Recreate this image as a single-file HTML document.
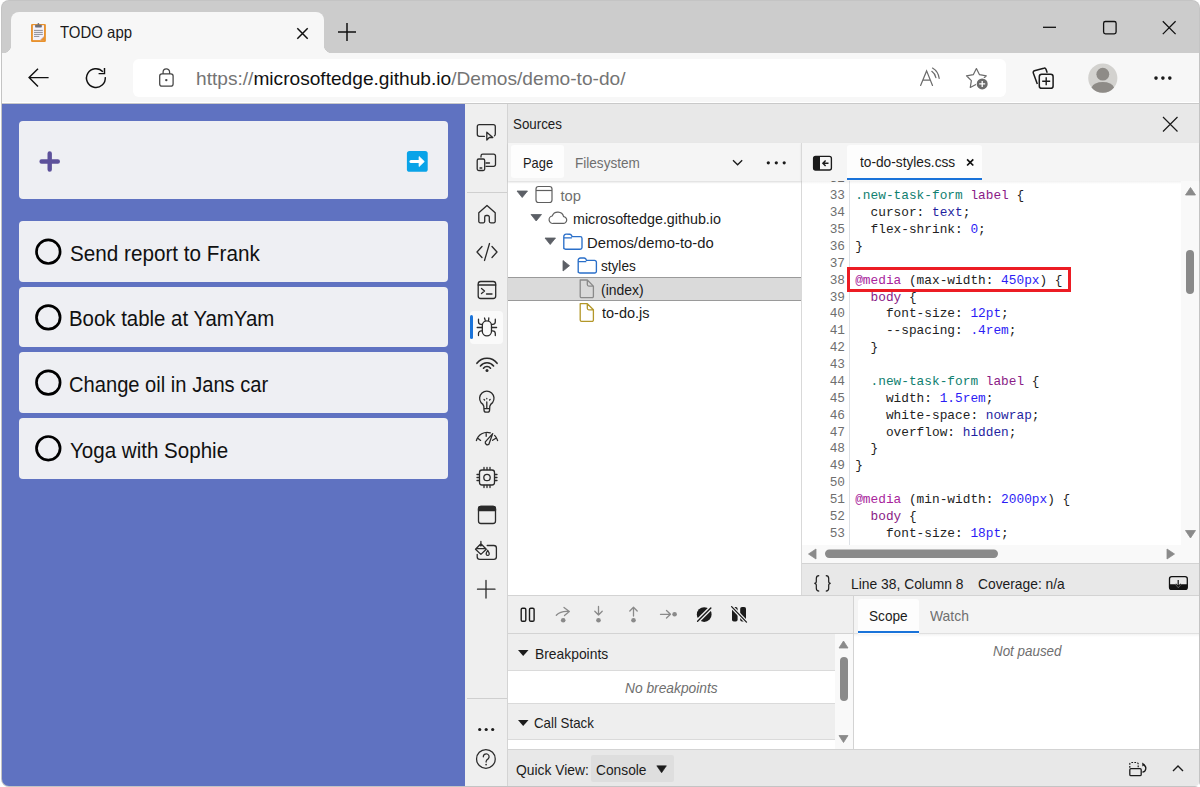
<!DOCTYPE html>
<html><head><meta charset="utf-8">
<style>
*{box-sizing:border-box;margin:0;padding:0}
html,body{width:1200px;height:787px;overflow:hidden;background:#fff}
body{position:relative;font-family:"Liberation Sans",sans-serif;color:#1b1b1b}
.a{position:absolute}
.t{position:absolute;white-space:pre;line-height:1}
svg{position:absolute;overflow:visible}
.cd div{height:16.88px}.cs{color:#0f8070}.ct{color:#8a1b86}.ck{color:#1f1fa0}.cn{color:#2b1cf5}.ca{color:#a8239b}
</style></head><body>
<!-- window frame -->
<div class="a" style="left:1px;top:0;width:1199px;height:787px;background:#c4c4c4;border-radius:8px 8px 5px 8px"></div>
<div class="a" style="left:2px;top:1px;width:1197px;height:785px;background:#cccccc;border-radius:7px 7px 4px 7px;overflow:hidden" id="win">
</div>
<!-- tab -->
<div class="a" style="left:11px;top:12px;width:313px;height:42px;background:#f7f7f7;border-radius:8px 8px 0 0"></div>
<div class="a" style="left:3px;top:45px;width:8px;height:8px;background:radial-gradient(circle at 0 0,#cccccc 8px,#f7f7f7 8.5px)"></div>
<div class="a" style="left:324px;top:45px;width:8px;height:8px;background:radial-gradient(circle at 100% 0,#cccccc 8px,#f7f7f7 8.5px)"></div>
<!-- toolbar -->
<div class="a" style="left:2px;top:53px;width:1197px;height:50px;background:#f7f7f7;border-bottom:1px solid #fff"></div>
<div class="a" style="left:2px;top:103px;width:1197px;height:1px;background:#c9c9c9"></div>
<!-- address bar -->
<div class="a" style="left:133px;top:59px;width:873px;height:38px;background:#fff;border-radius:6px"></div>


<!-- tab contents -->
<svg style="left:0;top:0" width="1200" height="110" viewBox="0 0 1200 110">
  <!-- clipboard icon -->
  <rect x="31" y="23.9" width="14.9" height="18" rx="1.2" fill="#e8922f"/>
  <rect x="32.9" y="25.2" width="11.1" height="14.9" fill="#f3f1fa"/>
  <path d="M40.2 40.1 L44 36.3 V40.1 Z" fill="#e8922f"/>
  <path d="M40.2 40.1 L44 36.3" stroke="#cfc8ea" stroke-width="0.9"/>
  <rect x="35.1" y="24.8" width="6.7" height="2.6" rx="0.6" fill="#6e6f78"/>
  <circle cx="38.4" cy="24" r="0.9" fill="#6e6f78"/>
  <path d="M34 30.4h8.8M34 32.4h8.8M34 34.4h8.8M34 36.4h5.3" stroke="#7b7b84" stroke-width="0.85"/>
  <!-- tab close -->
  <path d="M297.3 28.3 L307.7 38.7 M307.7 28.3 L297.3 38.7" stroke="#111" stroke-width="1.5"/>
  <!-- new tab -->
  <path d="M347 23 V41 M338 32 H356" stroke="#111" stroke-width="1.5"/>
  <!-- minimize -->
  <path d="M1043 27.3 H1056" stroke="#111" stroke-width="1.3"/>
  <!-- maximize -->
  <rect x="1103.6" y="21.5" width="12.5" height="12.3" rx="1.8" fill="none" stroke="#111" stroke-width="1.3"/>
  <!-- close -->
  <path d="M1162.8 21.3 L1175.6 34.1 M1175.6 21.3 L1162.8 34.1" stroke="#111" stroke-width="1.3"/>
  <!-- back -->
  <path d="M29 77.6 H48.6 M38 68.8 L29.1 77.6 L38 86.4" fill="none" stroke="#111" stroke-width="1.45" stroke-linejoin="miter"/>
  <!-- refresh -->
  <path d="M102.89 71.81 A9.4 9.4 0 1 0 105.25 77.12" fill="none" stroke="#111" stroke-width="1.45"/>
  <path d="M104.5 68 V73.6 H98.6" fill="none" stroke="#111" stroke-width="1.45"/>
  <!-- lock -->
  <rect x="159.7" y="73.9" width="13.4" height="12.2" rx="2.2" fill="none" stroke="#444" stroke-width="1.25"/>
  <path d="M163.1 73.9 V72 A3.25 3.25 0 0 1 169.6 72 V73.9" fill="none" stroke="#444" stroke-width="1.25"/>
  <circle cx="166.3" cy="80.1" r="1.2" fill="#444"/>
  <!-- read aloud -->
  <path d="M920.6 85.5 L926.6 70.9 L932.5 85.5 M923.2 80.1 H930" fill="none" stroke="#6b6b6b" stroke-width="1.2" stroke-linecap="round"/>
  <path d="M931.8 71.3 Q935 73.6 935.9 77.6 M932.5 68.1 Q938.2 71.5 939.2 78.4" fill="none" stroke="#6b6b6b" stroke-width="1.2" stroke-linecap="round"/>
  <!-- favorites star -->
  <path d="M976.40 68.60 L979.52 74.71 L986.29 75.79 L981.44 80.64 L982.51 87.41 L976.40 84.30 L970.29 87.41 L971.36 80.64 L966.51 75.79 L973.28 74.71 Z" fill="none" stroke="#6b6b6b" stroke-width="1.2" stroke-linejoin="round"/>
  <circle cx="982.2" cy="83.9" r="6.3" fill="#fff"/>
  <circle cx="982.2" cy="83.9" r="5.5" fill="#6b6b6b"/>
  <path d="M982.2 80.9 V86.9 M979.2 83.9 H985.2" stroke="#fff" stroke-width="1.3"/>
  <!-- collections -->
  <path d="M1037.3 84 L1033.3 73 A1.8 1.8 0 0 1 1034.4 70.7 L1043.8 68.2 A1.8 1.8 0 0 1 1046 69.3 L1047.2 72.8" fill="none" stroke="#1a1a1a" stroke-width="1.5" stroke-linejoin="round"/>
  <rect x="1039.3" y="74.3" width="13.8" height="14" rx="2.4" fill="#f7f7f7" stroke="#1a1a1a" stroke-width="1.5"/>
  <path d="M1046.2 77.3 V85.3 M1042.2 81.3 H1050.2" stroke="#1a1a1a" stroke-width="1.4"/>
  <!-- avatar -->
  <circle cx="1102.8" cy="78.1" r="14.6" fill="#d3d2cf"/>
  <circle cx="1102.8" cy="74.2" r="6.4" fill="#8e8b87"/>
  <path d="M1091.5 87.5 Q1094 82 1102.8 82 Q1111.6 82 1114.1 87.5 A14.6 14.6 0 0 1 1091.5 87.5 Z" fill="#8e8b87"/>
  <!-- more -->
  <circle cx="1156" cy="78.1" r="1.8" fill="#1a1a1a"/><circle cx="1162.9" cy="78.1" r="1.8" fill="#1a1a1a"/><circle cx="1169.8" cy="78.1" r="1.8" fill="#1a1a1a"/>
</svg>
<div class="t" style="left:59.6px;top:23.7px;font-size:16.5px;color:#1a1a1a;transform:scaleX(0.9063);transform-origin:0 0">TODO app</div>
<div class="t" style="left:196.31px;top:68.7px;font-size:19.25px;color:#747474;transform:scaleX(0.9935);transform-origin:0 0">https://<span style="color:#111">microsoftedge.github.io</span>/Demos/demo-to-do/</div>

<!-- page -->
<div class="a" style="left:2px;top:104px;width:463px;height:682px;background:#5f72c1;border-bottom-left-radius:7px"></div>


<div class="a" style="left:19px;top:121px;width:429px;height:78px;background:#eeeff3;border-radius:4px"></div>

<div class="a" style="left:19px;top:221px;width:429px;height:61px;background:#eeeff3;border-radius:4px"></div>
<div class="a" style="left:19px;top:287px;width:429px;height:60px;background:#eeeff3;border-radius:4px"></div>
<div class="a" style="left:19px;top:352px;width:429px;height:61px;background:#eeeff3;border-radius:4px"></div>
<div class="a" style="left:19px;top:418px;width:429px;height:61px;background:#eeeff3;border-radius:4px"></div>
<div class="t" style="left:69.64px;top:243.8px;font-size:21.5px;color:#111;transform:scaleX(0.9622);transform-origin:0 0">Send report to Frank</div>
<div class="t" style="left:68.9px;top:309.2px;font-size:21.5px;color:#111;transform:scaleX(0.9488);transform-origin:0 0">Book table at YamYam</div>
<div class="t" style="left:69.26px;top:375.2px;font-size:21.5px;color:#111;transform:scaleX(0.9365);transform-origin:0 0">Change oil in Jans car</div>
<div class="t" style="left:69.94px;top:440.7px;font-size:21.5px;color:#111;transform:scaleX(0.9561);transform-origin:0 0">Yoga with Sophie</div>

<svg style="left:0;top:0" width="470" height="500">
  <path d="M49.7 153.4 V169.6 M41.6 161.45 H57.8" stroke="#5d519b" stroke-width="4.4" stroke-linecap="round"/>
  <rect x="406.9" y="150.9" width="20.8" height="20.9" rx="2.6" fill="#09a3e8"/>
  <path d="M411 161.55 H420" stroke="#fff" stroke-width="3.1" stroke-linecap="round"/>
  <path d="M419.1 156.6 L424.3 161.55 L419.1 166.5 Z" fill="#fff" stroke="#fff" stroke-width="0.8" stroke-linejoin="round"/>
  <circle cx="48.3" cy="251.7" r="11.8" fill="none" stroke="#000" stroke-width="2.7"/>
  <circle cx="48.3" cy="317.4" r="11.8" fill="none" stroke="#000" stroke-width="2.7"/>
  <circle cx="48.3" cy="382.6" r="11.8" fill="none" stroke="#000" stroke-width="2.7"/>
  <circle cx="48.3" cy="448.3" r="11.8" fill="none" stroke="#000" stroke-width="2.7"/>
</svg>
<!-- devtools -->
<div class="a" style="left:465px;top:104px;width:734px;height:682px;background:#fff"></div>

<!-- activity bar -->
<div class="a" style="left:465px;top:104px;width:43px;height:682px;background:#efefef;border-right:1px solid #d4d4d4"></div>
<div class="a" style="left:467px;top:192px;width:40px;height:1px;background:#cfcfcf"></div>
<div class="a" style="left:467px;top:698px;width:40px;height:1px;background:#cfcfcf"></div>
<div class="a" style="left:470px;top:311px;width:33px;height:33px;background:#fafafa;border-radius:4px"></div>
<div class="a" style="left:470px;top:315px;width:3px;height:24px;background:#1a73d9;border-radius:1.5px"></div>
<!-- header -->
<div class="a" style="left:508px;top:104px;width:691px;height:39px;background:#e8e8e8"></div>
<div class="t" style="left:513.35px;top:116.75px;font-size:14.8px;color:#1b1b1b;transform:scaleX(0.9009);transform-origin:0 0">Sources</div>
<!-- navigator tabs -->
<div class="a" style="left:508px;top:143px;width:293px;height:38px;background:#f5f5f5;box-shadow:0 1px 2px rgba(0,0,0,0.09)"></div>
<div class="a" style="left:511px;top:145px;width:53px;height:33px;background:#fdfdfd;border-radius:3px"></div>
<div class="t" style="left:522.83px;top:155.8px;font-size:14.8px;color:#1b1b1b;transform:scaleX(0.8697);transform-origin:0 0">Page</div>
<div class="t" style="left:575.08px;top:155.7px;font-size:14.8px;color:#6f6f6f;transform:scaleX(0.9174);transform-origin:0 0">Filesystem</div>
<!-- editor tabs -->
<div class="a" style="left:801px;top:143px;width:398px;height:38px;background:#f5f5f5;box-shadow:0 1px 2px rgba(0,0,0,0.09);border-left:1px solid #dcdcdc"></div>
<div class="a" style="left:847px;top:145px;width:135px;height:35px;background:#fdfdfd;border-radius:3px 3px 0 0"></div>
<div class="a" style="left:847px;top:178px;width:135px;height:2px;background:#1a73d9"></div>
<div class="t" style="left:859.5px;top:155.3px;font-size:14.8px;color:#1b1b1b;transform:scaleX(0.9262);transform-origin:0 0">to-do-styles.css</div>

<!-- editor -->
<div class="a" style="left:801px;top:181px;width:380px;height:364px;background:#fff;overflow:hidden">
  <div class="a cd" style="left:0;top:-9.6px;width:44px;text-align:right;font-family:'Liberation Mono',monospace;font-size:12.8px;line-height:16.88px;color:#6e6e6e"><div>32</div><div>33</div><div>34</div><div>35</div><div>36</div><div>37</div><div>38</div><div>39</div><div>40</div><div>41</div><div>42</div><div>43</div><div>44</div><div>45</div><div>46</div><div>47</div><div>48</div><div>49</div><div>50</div><div>51</div><div>52</div><div>53</div><div>54</div></div>
  <div class="a" style="left:48px;top:0;width:1px;height:364px;background:#dde1e6"></div>
  <div class="a cd" style="left:54.2px;top:-9.6px;white-space:pre;font-family:'Liberation Mono',monospace;font-size:12.8px;line-height:16.88px;color:#222"><div><span class="cp">  </span></div><div><span class="cs">.new-task-form</span> <span class="ct">label</span> {</div><div>  cursor: <span class="ck">text</span>;</div><div>  flex-shrink: <span class="cn">0</span>;</div><div>}</div><div></div><div><span class="ca">@media</span> (max-width: <span class="cn">450px</span>) {</div><div>  <span class="ct">body</span> {</div><div>    font-size: <span class="cn">12pt</span>;</div><div>    --spacing: <span class="cn">.4rem</span>;</div><div>  }</div><div></div><div>  <span class="cs">.new-task-form</span> <span class="ct">label</span> {</div><div>    width: <span class="cn">1.5rem</span>;</div><div>    white-space: <span class="ck">nowrap</span>;</div><div>    overflow: <span class="ck">hidden</span>;</div><div>  }</div><div>}</div><div></div><div><span class="ca">@media</span> (min-width: <span class="cn">2000px</span>) {</div><div>  <span class="ct">body</span> {</div><div>    font-size: <span class="cn">18pt</span>;</div><div>    --spacing: <span class="cn">1rem</span>;</div></div>
</div>
<div class="a" style="left:847px;top:267px;width:224px;height:25px;border:3px solid #ec1c24"></div>


<!-- navigator / editor split -->
<div class="a" style="left:801px;top:143px;width:1px;height:452px;background:#d9d9d9"></div>
<!-- vertical scrollbar -->
<div class="a" style="left:1181px;top:181px;width:18px;height:364px;background:#f9f9f9"></div>

<div class="a" style="left:802px;top:545px;width:397px;height:18px;background:#f9f9f9"></div>
<!-- status bar -->
<div class="a" style="left:802px;top:563px;width:397px;height:33px;background:#e8e8e8;border-top:1px solid #d3d3d3;border-bottom:1px solid #d3d3d3"></div>
<div class="t" style="left:851.36px;top:577.2px;font-size:14.8px;color:#1b1b1b;transform:scaleX(0.9364);transform-origin:0 0">Line 38, Column 8</div>
<div class="t" style="left:977.57px;top:577.2px;font-size:14.8px;color:#1b1b1b;transform:scaleX(0.9337);transform-origin:0 0">Coverage: n/a</div>
<!-- bottom pane -->
<div class="a" style="left:508px;top:595px;width:345px;height:39px;background:#efefef;border-top:1px solid #d3d3d3;border-bottom:1px solid #d3d3d3"></div>
<div class="a" style="left:508px;top:634px;width:327px;height:37px;background:#eeeeee;border-bottom:1px solid #dadada"></div>
<div class="a" style="left:508px;top:671px;width:327px;height:32px;background:#fff"></div>
<div class="a" style="left:508px;top:703px;width:327px;height:37px;background:#eeeeee;border-top:1px solid #dadada;border-bottom:1px solid #dadada"></div>
<div class="a" style="left:508px;top:740px;width:327px;height:9px;background:#fff"></div>
<div class="a" style="left:835px;top:634px;width:18px;height:115px;background:#f9f9f9"></div>
<div class="t" style="left:534.96px;top:646.75px;font-size:14.8px;color:#1b1b1b;transform:scaleX(0.9364);transform-origin:0 0">Breakpoints</div>
<div class="t" style="left:625.3px;top:680.8px;font-size:14.8px;font-style:italic;color:#6f6f6f;transform:scaleX(0.9313);transform-origin:0 0">No breakpoints</div>
<div class="t" style="left:534.4px;top:715.8px;font-size:14.8px;color:#1b1b1b;transform:scaleX(0.8985);transform-origin:0 0">Call Stack</div>
<!-- sidebar -->
<div class="a" style="left:853px;top:596px;width:1px;height:153px;background:#d3d3d3"></div>
<div class="a" style="left:854px;top:596px;width:345px;height:38px;background:#f4f4f4;border-bottom:1px solid #e0e0e0"></div>
<div class="a" style="left:858px;top:599px;width:61px;height:35px;background:#fdfdfd;border-radius:3px 3px 0 0"></div>
<div class="a" style="left:858px;top:631px;width:61px;height:2px;background:#1a73d9"></div>
<div class="t" style="left:868.68px;top:608.7px;font-size:14.8px;color:#1b1b1b;transform:scaleX(0.92);transform-origin:0 0">Scope</div>
<div class="t" style="left:930.4px;top:608.7px;font-size:14.8px;color:#6f6f6f;transform:scaleX(0.939);transform-origin:0 0">Watch</div>
<div class="a" style="left:854px;top:634px;width:345px;height:115px;background:#fff"></div>
<div class="t" style="left:992.6px;top:643.7px;font-size:14.8px;font-style:italic;color:#6f6f6f;transform:scaleX(0.9053);transform-origin:0 0">Not paused</div>
<!-- quick view -->
<div class="a" style="left:508px;top:749px;width:691px;height:37px;background:#e8e8e8;border-top:1px solid #d3d3d3;border-bottom-right-radius:4px"></div>
<div class="a" style="left:591px;top:755px;width:83px;height:27px;background:#dedede;border-radius:2px"></div>
<div class="t" style="left:515.86px;top:762.7px;font-size:14.8px;color:#1b1b1b;transform:scaleX(0.9355);transform-origin:0 0">Quick View:</div>
<div class="t" style="left:595.77px;top:762.7px;font-size:14.8px;color:#1b1b1b;transform:scaleX(0.9302);transform-origin:0 0">Console</div>

<!-- tree -->
<div class="a" style="left:508px;top:277px;width:293px;height:24px;background:#dadada;border-top:1px solid #9a9a9a;border-bottom:1px solid #9a9a9a"></div>
<div class="t" style="left:560.4px;top:189.25px;font-size:14.8px;color:#6f6f6f;transform:scaleX(1.0);transform-origin:0 0">top</div>
<div class="t" style="left:573.03px;top:212.1px;font-size:14.8px;color:#1b1b1b;transform:scaleX(0.9671);transform-origin:0 0">microsoftedge.github.io</div>
<div class="t" style="left:587.0px;top:235.5px;font-size:14.8px;color:#1b1b1b;transform:scaleX(1.0);transform-origin:0 0">Demos/demo-to-do</div>
<div class="t" style="left:601.08px;top:259.2px;font-size:14.8px;color:#1b1b1b;transform:scaleX(0.9189);transform-origin:0 0">styles</div>
<div class="t" style="left:601.26px;top:283.2px;font-size:14.8px;color:#1b1b1b;transform:scaleX(0.9419);transform-origin:0 0">(index)</div>
<div class="t" style="left:602.2px;top:306px;font-size:14.8px;color:#1b1b1b;transform:scaleX(0.9792);transform-origin:0 0">to-do.js</div>

<svg style="left:0;top:0" width="1200" height="787">
  <path d="M1185.5 195 L1190.5 187.5 L1195.5 195 Z" fill="#8a8a8a" stroke="#8a8a8a" stroke-width="0.8" stroke-linejoin="round"/>
  <rect x="1186" y="250" width="8" height="44" rx="4" fill="#8a8a8a"/>
  <path d="M1185.5 530.5 L1190.5 538 L1195.5 530.5 Z" fill="#8a8a8a" stroke="#8a8a8a" stroke-width="0.8" stroke-linejoin="round"/>
  <!-- h scrollbar -->
  <path d="M816 549 L808.5 554 L816 559 Z" fill="#8a8a8a" stroke="#8a8a8a" stroke-width="0.8" stroke-linejoin="round"/>
  <rect x="825" y="549.5" width="173" height="8.5" rx="4.2" fill="#8a8a8a"/>
  <path d="M1167 549 L1174.5 554 L1167 559 Z" fill="#8a8a8a" stroke="#8a8a8a" stroke-width="0.8" stroke-linejoin="round"/>

  <!-- header close -->
  <path d="M1163 117 L1177.5 131.5 M1177.5 117 L1163 131.5" stroke="#1b1b1b" stroke-width="1.2"/>
  <!-- nav dropdown chevron + more -->
  <path d="M733 160.2 L737.6 164.8 L742.2 160.2" fill="none" stroke="#1b1b1b" stroke-width="1.3"/>
  <circle cx="768.3" cy="162.8" r="1.6" fill="#1b1b1b"/><circle cx="776.3" cy="162.8" r="1.6" fill="#1b1b1b"/><circle cx="784.2" cy="162.8" r="1.6" fill="#1b1b1b"/>
  <!-- toggle navigator icon -->
  <rect x="813.6" y="156.4" width="17.8" height="13.6" rx="2" fill="none" stroke="#1b1b1b" stroke-width="1.35"/>
  <path d="M814 157 H820 V170 H814 Z" fill="#1b1b1b"/>
  <path d="M828.5 163.2 H823 M825.6 160.5 L822.9 163.2 L825.6 165.9" fill="none" stroke="#1b1b1b" stroke-width="1.45"/>
  <!-- editor tab close -->
  <path d="M967.1 159.3 L973.3 165.5 M973.3 159.3 L967.1 165.5" stroke="#111" stroke-width="1.7"/>
  <!-- status bar icon -->
  <rect x="1169.5" y="576.6" width="17.8" height="12.8" rx="2.2" fill="none" stroke="#111" stroke-width="1.3"/>
  <path d="M1169.5 584.3 H1175 L1178.2 587.8 L1181.4 584.3 H1187.3 V587.2 A2.2 2.2 0 0 1 1185.1 589.4 H1171.7 A2.2 2.2 0 0 1 1169.5 587.2 Z" fill="#111"/>
  <path d="M1178.2 580 V586.6 M1175.6 583.9 L1178.2 586.6 L1180.8 583.9" fill="none" stroke="#111" stroke-width="1.2"/>
  <!-- braces -->
  <path d="M819.2 575.6 Q816.3 575.6 816.3 578.4 V581.4 Q816.3 583.3 814.3 583.3 Q816.3 583.3 816.3 585.2 V588.3 Q816.3 591.1 819.2 591.1 M825.8 575.6 Q828.7 575.6 828.7 578.4 V581.4 Q828.7 583.3 830.7 583.3 Q828.7 583.3 828.7 585.2 V588.3 Q828.7 591.1 825.8 591.1" fill="none" stroke="#1b1b1b" stroke-width="1.2"/>
</svg>

<svg style="left:0;top:0" width="1200" height="787">
 <g fill="none" stroke="#2b2b2b" stroke-width="1.3" stroke-linecap="round" stroke-linejoin="round">
  <!-- inspect -->
  <path d="M484.5 136.3 H479.3 A2 2 0 0 1 477.3 134.3 V126.6 A2 2 0 0 1 479.3 124.6 H493.3 A2 2 0 0 1 495.3 126.6 V134 A2 2 0 0 1 494.5 135.8"/>
  <path d="M486.8 132.2 V140 L489.3 137.5 H492.8 Z"/>
  <!-- device -->
  <path d="M481 157 V156 A1.8 1.8 0 0 1 482.8 154.2 H493.7 A1.8 1.8 0 0 1 495.5 156 V164.5 A1.8 1.8 0 0 1 493.7 166.3 H486"/>
  <path d="M486 163 H489.5"/>
  <rect x="477.2" y="159" width="7.5" height="11.5" rx="1.5"/>
  <path d="M480 168 H481.8"/>
  <!-- home -->
  <path d="M478.8 221.6 V212.8 L487 205.5 L495.2 212.8 V221.6 A1.5 1.5 0 0 1 493.7 222.8 H490.8 A1.5 1.5 0 0 1 489.3 221.3 V217 A1.5 1.5 0 0 0 487.8 215.5 H486.2 A1.5 1.5 0 0 0 484.7 217 V221.3 A1.5 1.5 0 0 1 483.2 222.8 H480.3 A1.5 1.5 0 0 1 478.8 221.6 Z"/>
  <!-- code -->
  <path d="M482 246.5 L477 252 L482 257.5 M492 246.5 L497 252 L492 257.5 M489.5 243.5 L484.5 260.5"/>
  <!-- console -->
  <rect x="478.2" y="281.5" width="17.5" height="17" rx="2.5"/>
  <path d="M478.2 285 H495.7"/>
  <path d="M481.5 288.5 L484.5 291 L481.5 293.5 M486.5 294 H492"/>
  <!-- network -->
  <path d="M476.9 363.3 A12.6 12.6 0 0 1 497.1 363.3 M480.45 366 A8.2 8.2 0 0 1 493.55 366 M483.5 368.25 A4.4 4.4 0 0 1 490.5 368.25" stroke-width="1.6"/>
  <circle cx="487" cy="370.4" r="1.5" fill="#2b2b2b" stroke="none"/>
  <!-- bulb -->
  <path d="M483.8 406.2 Q483.2 404.2 481 402.6 A7.2 7.2 0 1 1 492.6 402.6 Q490.4 404.2 489.8 406.2 L489.6 410 A2.2 2.2 0 0 1 487.4 412.2 H486.2 A2.2 2.2 0 0 1 484 410 Z M484 408.6 H489.6 M486.8 402 V408.6"/>
  <path d="M484 399.4 L484.6 400 M489.6 400 L490.2 399.4 M486.8 398.5 V398.8"/>
  <!-- gauge -->
  <path d="M476.4 440.5 A11.1 11.1 0 0 1 490.3 432.8 M494.6 435.4 A11.1 11.1 0 0 1 497.6 440.5 M486.2 432.6 V436.3 M477.8 438.2 L480.6 440.4 M495.9 438.2 L492.6 440.3"/>
  <path d="M492.7 433.6 L485.3 441.9 A2.3 2.3 0 0 0 488.9 444.3 Z"/>
  <!-- chip -->
  <rect x="479.5" y="470" width="15" height="15" rx="2.5"/>
  <circle cx="487" cy="477.5" r="3.2"/>
  <path d="M484 467.5 V469.5 M487 467.5 V469.5 M490 467.5 V469.5 M484 485.5 V487.5 M487 485.5 V487.5 M490 485.5 V487.5 M477 474.5 H479 M477 477.5 H479 M477 480.5 H479 M495 474.5 H497 M495 477.5 H497 M495 480.5 H497"/>
  <!-- app -->
  <rect x="478.5" y="506.5" width="17" height="17" rx="2.5"/>
  <path d="M478.5 509 A2.5 2.5 0 0 1 481 506.5 H493 A2.5 2.5 0 0 1 495.5 509 V510.5 H478.5 Z" fill="#2b2b2b"/>
  <!-- css overview -->
  <path d="M487.2 545.5 H493.8 A2.6 2.6 0 0 1 496.4 548.1 V556.7 A2.6 2.6 0 0 1 493.8 559.3 H479.8 A2.6 2.6 0 0 1 477.2 556.7 V554.3"/>
  <path d="M475.5 549.2 L480.9 543.8 L486.3 549.2 L480.9 554.4 Z M477 548.6 H485 M480.9 541.5 V546"/>
  <path d="M487.7 550.3 Q485.8 553 486.3 554.5 A1.5 1.5 0 0 0 489.1 554.5 Q489.6 553 487.7 550.3 Z"/>
  <!-- plus -->
  <path d="M486 580.5 V598 M477.5 589.2 H495"/>
  <!-- help -->
  <circle cx="485.9" cy="758.9" r="9.35" stroke-width="1.25"/>
 </g>
 <path d="M483.3 756.8 A2.9 2.9 0 1 1 488.4 758.6 Q486.1 759.9 486.1 761.6 V762" fill="none" stroke="#2b2b2b" stroke-width="1.25" stroke-linecap="round"/><circle cx="486.1" cy="764.6" r="0.85" fill="#2b2b2b"/>
 <circle cx="479.7" cy="729.5" r="1.6" fill="#1b1b1b"/><circle cx="486.2" cy="729.5" r="1.6" fill="#1b1b1b"/><circle cx="492.7" cy="729.5" r="1.6" fill="#1b1b1b"/>
 <!-- bug -->
 <g fill="none" stroke="#2b2b2b" stroke-width="1.3" stroke-linecap="round" stroke-linejoin="round">
  <rect x="482.3" y="320.8" width="9.2" height="15" rx="4.6"/>
  <path d="M485.3 320.5 L484.5 318 M488.6 320.5 L488.8 318"/>
  <path d="M482.3 324.3 H481 A2.5 2.5 0 0 1 478.5 321.8 V319.2 M491.5 324.3 H492.8 A2.5 2.5 0 0 0 495.3 321.8 V319.2"/>
  <path d="M477.2 327.5 H482.3 M491.5 327.5 H496.6"/>
  <path d="M482.3 330.8 H481.3 A2.8 2.8 0 0 0 478.5 333.6 V335.6 M491.5 330.8 H492.5 A2.8 2.8 0 0 1 495.3 333.6 V335.6"/>
 </g>
 <!-- tree icons -->
 <path d="M517 191 H527.5 L522.2 197.5 Z" fill="#5c5f66" stroke="#5c5f66" stroke-width="0.8" stroke-linejoin="round"/>
 <path d="M531 214.5 H541.5 L536.2 221 Z" fill="#5c5f66" stroke="#5c5f66" stroke-width="0.8" stroke-linejoin="round"/>
 <path d="M545 238 H555.5 L550.2 244.5 Z" fill="#5c5f66" stroke="#5c5f66" stroke-width="0.8" stroke-linejoin="round"/>
 <path d="M563 260.5 V271 L569.5 265.7 Z" fill="#5c5f66" stroke="#5c5f66" stroke-width="0.8" stroke-linejoin="round"/>
 <g fill="none" stroke-width="1.2" stroke-linejoin="round">
  <rect x="536" y="186.5" width="16" height="16" rx="2.5" stroke="#5f5f5f"/>
  <path d="M536 190.5 H552" stroke="#5f5f5f"/>
  <path d="M553.5 223.4 H563 A3.4 3.4 0 0 0 563.6 216.6 A6 6 0 0 0 552.2 216 A3.7 3.7 0 0 0 553.5 223.4 Z" stroke="#5f5f5f"/>
<path d="M563.8 248.5 V236.7 A2.3 2.3 0 0 1 566.0999999999999 234.2 H569.5999999999999 A2.3 2.3 0 0 1 571.9 236.6 H580.1999999999999 A1.8 1.8 0 0 1 582.0 238.39999999999998 V247.39999999999998 A1.8 1.8 0 0 1 580.1999999999999 249.2 H565.5999999999999 A1.8 1.8 0 0 1 563.8 247.39999999999998 Z M563.8 237.79999999999998 H571.9" stroke="#2a6fc9" stroke-width="1.35"/>
  <path d="M578.2 272.3 V260.5 A2.3 2.3 0 0 1 580.5 258.0 H584.0 A2.3 2.3 0 0 1 586.3000000000001 260.4 H594.6 A1.8 1.8 0 0 1 596.4000000000001 262.2 V271.2 A1.8 1.8 0 0 1 594.6 273.0 H580.0 A1.8 1.8 0 0 1 578.2 271.2 Z M578.2 261.6 H586.3000000000001" stroke="#2a6fc9" stroke-width="1.35"/>
  <path d="M580.2 280 H587.3 L593.4 286.1 V296.4 A1.3 1.3 0 0 1 592.1 297.7 H581.5 A1.3 1.3 0 0 1 580.2 296.4 Z M587.3 280 V284.6 A1.5 1.5 0 0 0 588.8 286.1 H593.4" stroke="#8a8a8a" stroke-width="1.3"/>
  <path d="M580.2 303.7 H587.3 L593.4 309.8 V320.1 A1.3 1.3 0 0 1 592.1 321.4 H581.5 A1.3 1.3 0 0 1 580.2 320.1 Z M587.3 303.7 V308.3 A1.5 1.5 0 0 0 588.8 309.8 H593.4" stroke="#b39729" stroke-width="1.3"/>
 </g>
 <!-- debugger toolbar -->
 <g fill="none" stroke="#1b1b1b" stroke-width="1.4">
  <rect x="521.2" y="608.3" width="4.6" height="13" rx="1.3"/>
  <rect x="529.5" y="608.3" width="4.6" height="13" rx="1.3"/>
 </g>
 <g fill="none" stroke="#8a8a8a" stroke-width="1.3" stroke-linecap="round" stroke-linejoin="round">
  <path d="M556.3 615.3 Q561 610.5 569.3 611.5 M564 607.5 L569.3 611.5 L564.5 615.5"/>
  <path d="M598.5 606.5 V615 M594.8 611.3 L598.5 615 L602.2 611.3"/>
  <path d="M633.5 616 V607.3 M629.8 611 L633.5 607.3 L637.2 611"/>
  <path d="M660.5 614.3 H670.5 M666.5 610.5 L670.5 614.3 L666.5 618"/>
 </g>
 <g fill="#8a8a8a"><circle cx="563.2" cy="620.3" r="2.3"/><circle cx="598.5" cy="620.3" r="2.3"/><circle cx="633.5" cy="620.3" r="2.3"/><circle cx="674.6" cy="614.3" r="2.3"/></g>
 <circle cx="704.2" cy="614.6" r="7.4" fill="#1b1b1b"/>
 <path d="M697 621.8 L711.3 607.5" stroke="#efefef" stroke-width="4.2"/>
 <path d="M697.6 621.2 L710.8 608" stroke="#1b1b1b" stroke-width="1.4" stroke-linecap="round"/>
 <rect x="732" y="607" width="5.6" height="14.5" rx="1.8" fill="#1b1b1b"/>
 <rect x="740.2" y="607" width="5.8" height="14.5" rx="1.8" fill="#1b1b1b"/>
 <path d="M731.2 606.2 L746.9 622.5" stroke="#efefef" stroke-width="3.6"/>
 <path d="M731.6 606.6 L746.5 622.1" stroke="#1b1b1b" stroke-width="1.3" stroke-linecap="round"/>
 <!-- section triangles -->
 <path d="M518 650 H528.5 L523.2 656 Z" fill="#1b1b1b"/>
 <path d="M518 720 H528.5 L523.2 726 Z" fill="#1b1b1b"/>
 <path d="M656.8 765.8 H666.4 L661.6 772.8 Z" fill="#1b1b1b" stroke="#1b1b1b" stroke-width="0.6" stroke-linejoin="round"/>
 <!-- bottom scrollbar -->
 <path d="M839 648 L843.5 641 L848 648 Z" fill="#8a8a8a" stroke="#8a8a8a" stroke-width="0.8" stroke-linejoin="round"/>
 <rect x="840" y="657" width="8" height="44" rx="4" fill="#8a8a8a"/>
 <path d="M839 735.5 L843.5 742.5 L848 735.5 Z" fill="#8a8a8a" stroke="#8a8a8a" stroke-width="0.8" stroke-linejoin="round"/>
 <!-- bottom right icons -->
 <g fill="none" stroke="#1b1b1b" stroke-width="1.2">
  <path d="M1129.8 767.8 V764 A1.5 1.5 0 0 1 1131.3 762.5 H1136.7 A1.5 1.5 0 0 1 1138.2 764 V767.8" stroke-dasharray="1.7 1.3"/>
  <rect x="1129.8" y="768.6" width="11.4" height="7" rx="1.2" stroke-width="1.3"/>
  <path d="M1143.6 764.8 A3.9 3.9 0 0 1 1142.4 772.2" stroke-width="1.3"/>
  <path d="M1173 771 L1178 766 L1183 771" stroke-width="1.4"/>
 </g>
 <path d="M1142.2 762.6 L1145 764.6 L1142.4 766.6 Z" fill="#1b1b1b"/>
</svg>

<div class="a" style="left:508px;top:181px;width:673px;height:3px;background:linear-gradient(rgba(0,0,0,0.06),rgba(0,0,0,0))"></div>
<div class="a" style="left:854px;top:634px;width:345px;height:3px;background:linear-gradient(rgba(0,0,0,0.05),rgba(0,0,0,0))"></div>
</body></html>
